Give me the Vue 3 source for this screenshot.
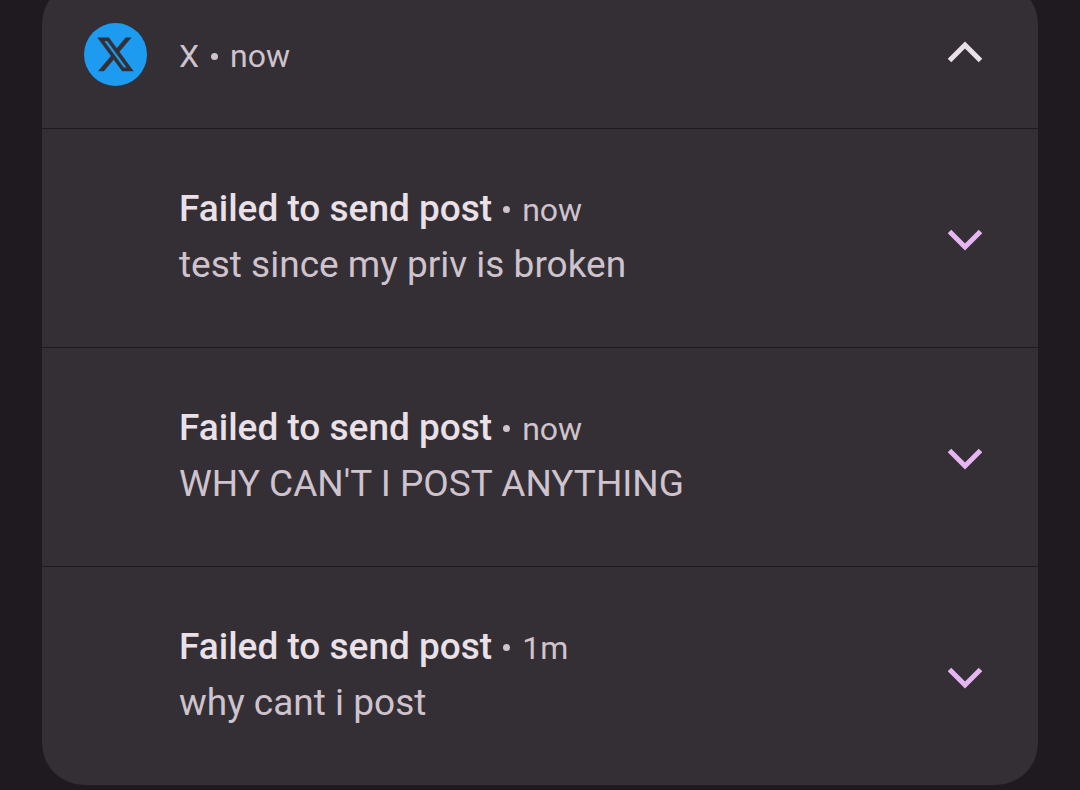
<script setup>
import { ref } from 'vue'
const open = ref(true)
const notices = [
  { title: 'Failed to send post', time: 'now', body: 'test since my priv is broken' },
  { title: 'Failed to send post', time: 'now', body: "WHY CAN'T I POST ANYTHING" },
  { title: 'Failed to send post', time: '1m', body: 'why cant i post' },
]
</script>

<template>
  <main class="shade">
    <section class="card" aria-label="X notifications">
      <header class="head">
        <svg class="logo" viewBox="0 0 63 63" aria-hidden="true">
          <circle cx="31.5" cy="31.5" r="31.5" fill="#1d9bf0" />
          <g transform="translate(11.6 10.9) scale(1.65 1.71)" fill="#342f34" stroke="#342f34" stroke-width=".25">
            <path d="M18.244 2.25h3.308l-7.227 8.26 8.502 11.24H16.17l-5.214-6.817L4.99 21.75H1.68l7.73-8.835L1.254 2.25H8.08l4.713 6.231zm-1.161 17.52h1.833L7.084 4.126H5.117z" />
          </g>
        </svg>
        <p class="app"><span>X</span><span class="dot"></span><span>now</span></p>
        <button class="toggle up" type="button" aria-label="Collapse" @click="open = !open">
          <svg viewBox="0 0 36 22" aria-hidden="true"><path d="M2.5 19.5 18 4l15.5 15.5" /></svg>
        </button>
      </header>
      <template v-if="open">
        <article v-for="(n, i) in notices" :key="i" class="row">
          <div class="text">
            <div class="line">
              <h2>{{ n.title }}</h2><span class="dot"></span><span class="time">{{ n.time }}</span>
            </div>
            <p class="body">{{ n.body }}</p>
          </div>
          <button class="toggle" type="button" aria-label="Expand">
            <svg viewBox="0 0 36 22" aria-hidden="true"><path d="M2.5 2.5 18 18 33.5 2.5" /></svg>
          </button>
        </article>
      </template>
    </section>
  </main>
</template>

<style>
body { margin: 0; background: #1f1a1f; }
</style>

<style scoped>
.shade {
  padding: 0 42px 5px;
  overflow: hidden;
  font-family: Roboto, "Liberation Sans", sans-serif;
  color: #cfc3cd;
}
.card {
  margin-top: -18px;
  padding-top: 18px;
  background: #342f34;
  border-radius: 42px;
}
.head {
  display: flex;
  align-items: center;
  height: 128px;
  padding: 0 55px 20px 42px;
  box-sizing: border-box;
}
.logo { width: 63px; height: 63px; margin-right: 32px; }
.app {
  display: flex;
  align-items: center;
  margin: 0;
  padding-top: 4px;
  font-size: 32px;
  line-height: 40px;
}
.dot {
  width: 7px;
  height: 7px;
  margin: 0 12px;
  border-radius: 50%;
  background: #cfc3cd;
}
.toggle {
  margin-left: auto;
  padding: 4px 0 0;
  border: 0;
  background: none;
  color: #e5b6f2;
  cursor: pointer;
}
.toggle.up { padding: 0 0 4px; color: #eae0e7; }
.toggle svg {
  display: block;
  width: 36px;
  height: 22px;
  fill: none;
  stroke: currentColor;
  stroke-width: 5;
}
.row {
  display: flex;
  align-items: center;
  padding-right: 55px;
  padding-left: 137px;
  border-top: 1px solid #1f1a1f;
}
.text { padding: 52px 0 54px; }
.line { display: flex; align-items: center; }
.line .dot { margin: 0 12px 0 11px; }
h2 {
  margin: 0;
  font-size: 37px;
  font-weight: 500;
  line-height: 56px;
  color: #eae0e7;
}
.time { padding-top: 2px; font-size: 32px; line-height: 40px; }
.body { margin: 0; font-size: 37px; line-height: 56px; }
</style>
